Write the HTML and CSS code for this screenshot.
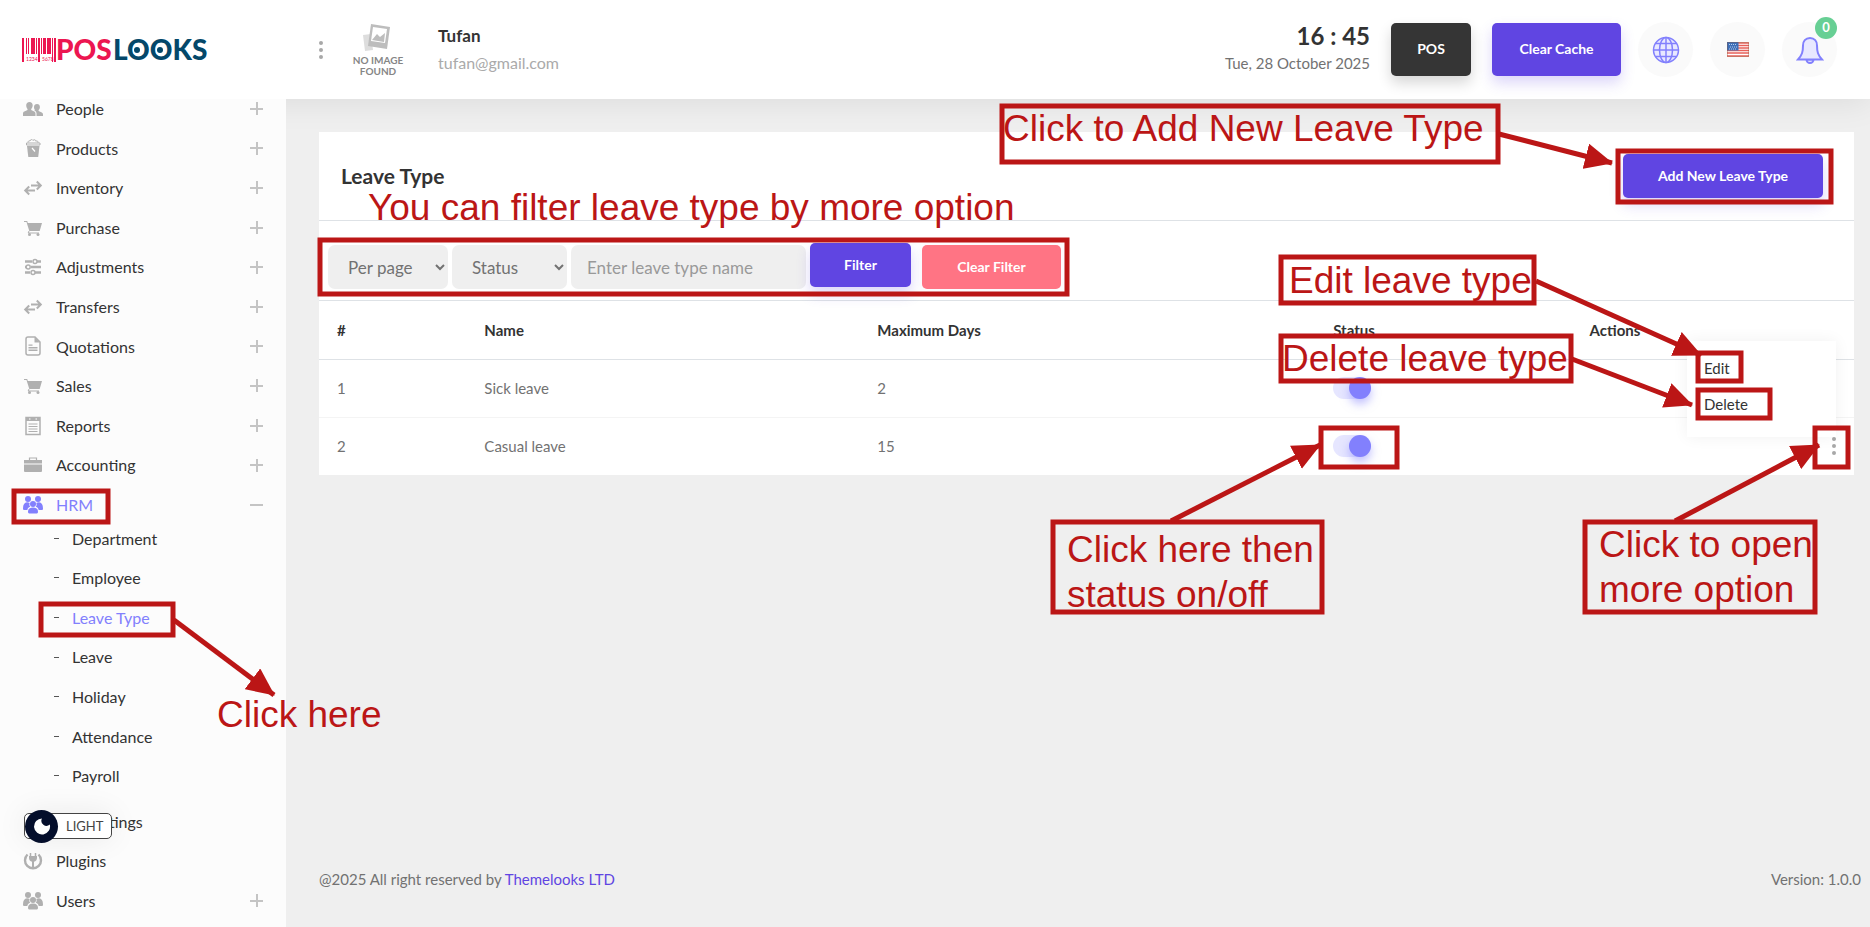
FILE: index.html
```html
<!DOCTYPE html>
<html lang="en">
<head>
<meta charset="utf-8">
<title>Leave Type</title>
<link rel="stylesheet" href="styles.css">
</head>
<body>
<svg class="sprite" aria-hidden="true">
  <symbol id="i-people" viewBox="0 0 20 20"><path d="M6.500 3c2 0 3.200 1.300 3.200 3.300 0 1.500-.6 2.800-1.500 3.600v1.200l3 1.500c.8.400 1.300 1.200 1.300 2.100V17H0v-2.300c0-.9.500-1.700 1.300-2.100l3.200-1.500V9.900C3.700 9.100 3.200 7.800 3.200 6.300 3.200 4.300 4.500 3 6.500 3z"/><path d="M14 5c1.800 0 2.900 1.200 2.900 2.900 0 1.300-.5 2.400-1.300 3.100v1l3.200 1.500c.8.400 1.200 1 1.200 1.900V17h-6.500v-2.500c0-1.200-.6-2.200-1.600-2.800l-.7-.4.800-.4V11c-.6-.7-1-1.800-1-3.100C11 6.200 12.200 5 14 5z"/></symbol>
  <symbol id="i-products" viewBox="0 0 20 20"><path d="M4 8h12.500l-1.300 11H5.300z"/><path d="M3.500 5h13.500v2H3.500zM5 4.500c0-1.500 1-2 2-1.500 0-1.500 2.500-2 3-.5 1-1.500 3-.5 2.800.7 1.500-.8 2.700.3 2.200 1.700" fill="none" stroke="currentColor"/><path d="M9 10l3 3.500" stroke="#fff" fill="none" stroke-width="1.200"/></symbol>
  <symbol id="i-swap" viewBox="0 0 20 20"><path d="M8 7.500h9.500M13.800 3.500l4 4-4 4M12 12.500H2.500M6.200 8.500l-4 4 4 4" fill="none" stroke="currentColor" stroke-width="2"/></symbol>
  <symbol id="i-cart" viewBox="0 0 20 20"><path d="M1 3h3.200l.6 2H19l-2.300 8H6.300L3.500 4H1z"/><path d="M6 13l-.8 2H16" fill="none" stroke="currentColor"/><circle cx="6.500" cy="16.500" r="1.500"/><circle cx="15" cy="16.500" r="1.500"/></symbol>
  <symbol id="i-sliders" viewBox="0 0 20 20"><path d="M2 4.500h7M14 4.500h4M2 10h1.500M8 10h10M2 15.500h5M12 15.500h6" fill="none" stroke="currentColor" stroke-width="2.400"/><g fill="none" stroke="currentColor" stroke-width="1.500"><circle cx="12" cy="4.500" r="2"/><circle cx="5.200" cy="10" r="2"/><circle cx="10" cy="15.500" r="2"/></g></symbol>
  <symbol id="i-file" viewBox="0 0 20 20"><path d="M5 1h7l5 5v11a2 2 0 0 1-2 2H5a2 2 0 0 1-2-2V3a2 2 0 0 1 2-2z" fill="none" stroke="currentColor" stroke-width="1.500"/><path d="M11.500 1L17 6.500h-5.500zM5.500 8.500h4v1.300h-4zM5.500 11h9v1.500h-9zM5.500 13.500h9V15h-9z"/></symbol>
  <symbol id="i-report" viewBox="0 0 20 20"><path d="M3 1.500h14v17H3z" fill="none" stroke="currentColor" stroke-width="1.500"/><path d="M3 1.500h14V5H3z"/><path d="M5.500 8h9M5.500 10.500h9M5.500 13h9M5.500 15.500h9" fill="none" stroke="currentColor" stroke-width="1.200"/><path d="M6 3h1.500M12.500 3H14" stroke="#fff"/></symbol>
  <symbol id="i-case" viewBox="0 0 20 20"><path d="M1 5h18v3.500H1zM1 9.500h18V16a1 1 0 0 1-1 1H2a1 1 0 0 1-1-1z"/><path d="M6.500 5V3h7v2" fill="none" stroke="currentColor" stroke-width="1.200"/></symbol>
  <symbol id="i-group" viewBox="0 0 20 20"><circle cx="5" cy="4" r="3"/><circle cx="15" cy="4" r="3"/><path d="M0 13.500C0 9.500 1.500 7.500 4 7.300c1 0 2 .2 2.700.8C6 10 6.500 11 7.200 11.800 5.500 12.500 4.500 13.500 4.300 15H1.500C.5 15 0 14.500 0 13.500zM20 13.500c0-4-1.500-6-4-6.200-1 0-2 .2-2.700.8.700 1.900.2 2.900-.5 3.700 1.700.7 2.700 1.700 2.900 3.200h2.800c1 0 1.500-.5 1.500-1.500z"/><circle cx="10" cy="9" r="3"/><path d="M5 17c0-3 1.500-4.600 5-4.600s5 1.600 5 4.600c0 1-1 1.500-2 1.500H7c-1 0-2-.5-2-1.500z"/></symbol>
  <symbol id="i-gear" viewBox="0 0 20 20"><circle cx="10" cy="10" r="6" fill="none" stroke="currentColor" stroke-width="4"/></symbol>
  <symbol id="i-plug" viewBox="0 0 20 20"><path d="M4.500 3.500a8 8 0 1 0 11 0" fill="none" stroke="currentColor" stroke-width="2.400"/><path d="M7.500 2v3M12.500 2v3" stroke="currentColor" stroke-width="1.500"/><path d="M6 5h8v2c0 2-1.200 3.300-3 3.700V16H9v-5.300C7.200 10.300 6 9 6 7z"/></symbol>
</svg>

<header class="topbar">
  <a class="brand" href="#" aria-label="PosLooks">
    <svg class="logo" width="190" height="34" viewBox="0 0 190 34">
      <g fill="#ec1651"><path d="M0 5h2v24H0zM4 5h1v16H4zM6 5h1v16H6zM9 5h4v16H9zM14 5h1v16h-1zM16 5h2v24h-2zM19 5h1v16h-1zM21 5h3v16h-3zM25 5h4v16h-4zM30 5h1v24h-1zM32 5h2v24h-2z"/>
      <text class="logo-small" x="4" y="28">1234</text><text class="logo-small" x="20" y="28">5678</text>
      <text class="logo-text" x="34" y="27">POS</text></g>
      <text class="logo-text" x="91" y="27" fill="#04486a">LOOKS</text>
      <g fill="#04486a"><circle cx="115" cy="17" r="3"/><circle cx="138" cy="17" r="3"/></g>
    </svg>
  </a>
  <button class="dots" aria-label="Menu"><i></i><i></i><i></i></button>
  <div class="avatar">
    <svg width="32" height="30" viewBox="0 0 32 30"><path d="M1 12l8-1 2 16-8 1z" fill="#ddd"/><path d="M9 1l19 3-3 22L6 23z" fill="#bdbdbd"/><path d="M11 4l14 2-2 14-14-2z" fill="#fff"/><path d="M10 17l5-6 3 3 5-4-1 9z" fill="#bdbdbd"/></svg>
    <span>NO IMAGE<br>FOUND</span>
  </div>
  <div class="user"><strong>Tufan</strong><span>tufan@gmail.com</span></div>
  <div class="clock"><strong>16 : 45</strong><span>Tue, 28 October 2025</span></div>
  <button class="btn btn-tall btn-dark">POS</button>
  <button class="btn btn-tall btn-wide">Clear Cache</button>
  <div class="rounds">
    <button class="round" aria-label="Website"><svg width="28" height="28" viewBox="0 0 28 28" fill="#e8e8ff" stroke="#8280fd" stroke-width="1.500"><circle cx="14" cy="14" r="12.500"/><ellipse cx="14" cy="14" rx="6.500" ry="12.500"/><path d="M14 1.500v25M1.500 14h25M3.500 7.500h21M3.500 20.500h21" fill="none"/></svg></button>
    <button class="round" aria-label="Language"><svg width="22" height="15" viewBox="0 0 22 15"><path fill="#fff" d="M0 0h22v15H0z"/><path d="M0 1h22M0 3.500h22M0 6h22M0 8.500h22M0 11h22M0 14h22" stroke="#e8605a" stroke-width="1.400"/><path fill="#3d6fb8" d="M0 0h11.500v8.500H0z"/><path d="M2 2.500h8M3 5h7M2 7h8" stroke="#b9cdea" stroke-dasharray="1 1"/><path d="M.5.500h21v14H.5z" fill="none" stroke="#8a5030" stroke-opacity=".35"/></svg></button>
    <button class="round" aria-label="Notifications"><svg width="28" height="28" viewBox="0 0 28 28" fill="#e8e8ff" stroke="#8280fd" stroke-width="2"><path d="M10.500 23.500a3.500 3.500 0 0 0 7 0z"/><path d="M14 2c-4.500 0-7 3.300-7 7.500 0 6.500-1 9.500-5 14h24c-4-4.500-5-7.500-5-14C21 5.300 18.500 2 14 2z"/></svg><b class="badge">0</b></button>
  </div>
</header>

<div class="shell">
  <nav class="sidebar">
    <ul class="menu">
      <li><a href="#"><svg><use href="#i-people"/></svg>People<em class="plus"></em></a></li>
      <li><a href="#"><svg><use href="#i-products"/></svg>Products<em class="plus"></em></a></li>
      <li><a href="#"><svg><use href="#i-swap"/></svg>Inventory<em class="plus"></em></a></li>
      <li><a href="#"><svg><use href="#i-cart"/></svg>Purchase<em class="plus"></em></a></li>
      <li><a href="#"><svg><use href="#i-sliders"/></svg>Adjustments<em class="plus"></em></a></li>
      <li><a href="#"><svg><use href="#i-swap"/></svg>Transfers<em class="plus"></em></a></li>
      <li><a href="#"><svg><use href="#i-file"/></svg>Quotations<em class="plus"></em></a></li>
      <li><a href="#"><svg><use href="#i-cart"/></svg>Sales<em class="plus"></em></a></li>
      <li><a href="#"><svg><use href="#i-report"/></svg>Reports<em class="plus"></em></a></li>
      <li><a href="#"><svg><use href="#i-case"/></svg>Accounting<em class="plus"></em></a></li>
      <li><a class="active" href="#"><svg><use href="#i-group"/></svg>HRM<em class="plus minus"></em></a>
        <ul class="submenu">
          <li><a href="#">Department</a></li>
          <li><a href="#">Employee</a></li>
          <li><a class="active" href="#">Leave Type</a></li>
          <li><a href="#">Leave</a></li>
          <li><a href="#">Holiday</a></li>
          <li><a href="#">Attendance</a></li>
          <li><a href="#">Payroll</a></li>
        </ul>
      </li>
      <li><a href="#"><svg><use href="#i-gear"/></svg>Site Settings</a></li>
      <li><a href="#"><svg><use href="#i-plug"/></svg>Plugins</a></li>
      <li><a href="#"><svg><use href="#i-group"/></svg>Users<em class="plus"></em></a></li>
    </ul>
  </nav>

  <main class="main">
    <section class="card">
      <div class="card-head">
        <h1>Leave Type</h1>
        <button class="btn btn-add">Add New Leave Type</button>
      </div>
      <form class="filters">
        <select class="field per-page" aria-label="Per page"><option>Per page</option></select>
        <select class="field status" aria-label="Status"><option>Status</option></select>
        <input class="field name" type="text" aria-label="Leave type name" placeholder="Enter leave type name">
        <button class="btn btn-filter" type="button">Filter</button>
        <button class="btn btn-clear" type="button">Clear Filter</button>
      </form>
      <table class="table">
        <colgroup><col class="c-num"><col class="c-name"><col class="c-days"><col class="c-status"><col></colgroup>
        <thead><tr><th>#</th><th>Name</th><th>Maximum Days</th><th>Status</th><th>Actions</th></tr></thead>
        <tbody>
          <tr><td>1</td><td>Sick leave</td><td>2</td>
            <td><input class="switch" type="checkbox" checked aria-label="Sick leave status"></td>
            <td><div class="actions"><button class="dots" aria-label="More"><i></i><i></i><i></i></button></div></td></tr>
          <tr><td>2</td><td>Casual leave</td><td>15</td>
            <td><input class="switch" type="checkbox" checked aria-label="Casual leave status"></td>
            <td><div class="actions"><button class="dots" aria-label="More"><i></i><i></i><i></i></button>
              <div class="dropdown"><a href="#">Edit</a><a href="#">Delete</a></div></div></td></tr>
        </tbody>
      </table>
    </section>
    <footer class="footer"><span>@2025 All right reserved by <a href="#">Themelooks LTD</a></span><span>Version: 1.0.0</span></footer>
  </main>
</div>

<button class="theme"><span class="moon"><svg width="18" height="18" viewBox="0 0 18 18"><path d="M9 1.500a5 5 0 0 0 7.800 6A8 8 0 1 1 9 1.500z" fill="#fff"/></svg></span>LIGHT</button>

<svg class="notes">
  <defs><marker id="head" viewBox="0 0 28 26" refX="27" refY="13" markerWidth="28" markerHeight="26" markerUnits="userSpaceOnUse" orient="auto"><path d="M0 0l28 13L0 26z"/></marker></defs>
  <g class="boxes">
    <rect x="1002" y="106" width="496" height="56"/>
    <rect x="1618" y="151" width="213" height="51"/>
    <rect x="320" y="240" width="747" height="54"/>
    <rect x="1281" y="257" width="253" height="46"/>
    <rect x="1281" y="336" width="290" height="45"/>
    <rect x="1698" y="353" width="43" height="28"/>
    <rect x="1698" y="390" width="72" height="28"/>
    <rect x="1321" y="428" width="76" height="39"/>
    <rect x="1815" y="428" width="33" height="39"/>
    <rect x="1053" y="522" width="269" height="90"/>
    <rect x="1585" y="522" width="230" height="90"/>
    <rect x="14" y="491" width="94" height="31"/>
    <rect x="41" y="604" width="132" height="31"/>
  </g>
  <g class="arrows">
    <path d="M174 620L274 695"/><path d="M1499 134L1612 163"/><path d="M1536 281L1701 355"/><path d="M1572 359L1692 405"/><path d="M1171 521L1320 445"/><path d="M1675 521L1819 445"/>
  </g>
  <g class="labels">
    <text x="1003" y="141">Click to Add New Leave Type</text>
    <text x="368" y="220">You can filter leave type by more option</text>
    <text x="1289" y="293">Edit leave type</text>
    <text x="1282" y="371">Delete leave type</text>
    <text x="1067" y="562">Click here then</text>
    <text x="1067" y="607">status on/off</text>
    <text x="1599" y="557">Click to open</text>
    <text x="1599" y="602">more option</text>
    <text x="217" y="727">Click here</text>
  </g>
</svg>
</body>
</html>
```
FILE: styles.css
```css
* { box-sizing: border-box; }
body {
  margin: 0;
  height: 100vh;
  display: flex;
  flex-direction: column;
  overflow: hidden;
  background: #efefef;
  color: #727272;
  font: 15px/1.6 Lato, sans-serif;
}
a { color: inherit; text-decoration: none; }
ul { margin: 0; padding: 0; list-style: none; }
button { border: 0; padding: 0; background: none; font: inherit; color: inherit; }
.sprite { position: absolute; width: 0; height: 0; }

.topbar {
  display: flex;
  align-items: center;
  height: 99px;
  flex: none;
  padding: 0 33px 0 22px;
  background: #fff;
  box-shadow: 0 4px 30px rgba(0, 0, 0, .08);
  z-index: 2;
}
.brand { width: 297px; flex: none; display: flex; }
.logo-text { font: 900 28px Lato, sans-serif; }
.logo-small { font: 5px Lato, sans-serif; }
.dots { display: flex; flex-direction: column; gap: 3px; width: 4px; }
.dots i { width: 4px; height: 4px; border-radius: 50%; background: #a8a8a8; }
.avatar {
  display: flex;
  flex-direction: column;
  align-items: center;
  width: 60px;
  margin-left: 25px;
  text-align: center;
  white-space: nowrap;
  font: bold 10px/11px Lato, sans-serif;
  color: #868686;
}
.avatar svg { margin-bottom: 2px; }
.user { margin-left: 30px; display: flex; flex-direction: column; gap: 3px; }
.user strong { color: #333; font-size: 17px; line-height: 24px; }
.user span { color: #aaa; font-size: 16px; line-height: 24px; }
.clock { margin-left: auto; margin-right: 21px; padding-bottom: 4px; text-align: right; display: flex; flex-direction: column; }
.clock strong { color: #333; font-size: 24px; line-height: 30px; }
.btn {
  height: 44px;
  padding: 0 33px;
  border-radius: 5px;
  background: #6045e2;
  box-shadow: 0 7px 14px rgba(96, 69, 226, .22);
  color: #fff;
  font-size: 14px;
  font-weight: bold;
  white-space: nowrap;
}
.btn-tall { height: 53px; padding: 0; width: 80px; margin-right: 21px; }
.btn-wide { width: 129px; margin-right: 17px; }
.btn-dark { background: #353535; box-shadow: 0 7px 14px rgba(0, 0, 0, .16); }
.rounds { display: flex; gap: 17px; }
.round {
  position: relative;
  width: 55px;
  height: 55px;
  border-radius: 50%;
  background: #fafafa;
  display: flex;
  align-items: center;
  justify-content: center;
}
.badge {
  position: absolute;
  top: -5px;
  right: 0;
  width: 22px;
  height: 22px;
  border-radius: 50%;
  background: #67cf94;
  color: #fff;
  font-size: 13px;
  line-height: 21px;
}

.shell { flex: 1; display: flex; min-height: 0; }
.sidebar { width: 286px; flex: none; background: #fcfcfc; overflow: hidden; font-size: 16px; color: #333; z-index: 3; }
.menu { margin-top: -10px; padding: 0 23px; }
.menu a { display: flex; align-items: center; padding: 7px 0; }
.menu svg { width: 20px; height: 20px; margin-right: 13px; color: #b0b0b0; fill: currentColor; }
.menu .active, .menu .active svg { color: #8280fd; }
.plus {
  margin-left: auto;
  width: 13px;
  height: 13px;
  background: linear-gradient(#c4c4c4, #c4c4c4) center / 13px 2px no-repeat, linear-gradient(#c4c4c4, #c4c4c4) center / 2px 13px no-repeat;
}
.minus { background: linear-gradient(#c4c4c4, #c4c4c4) center / 13px 2px no-repeat; }
.submenu { margin-top: -6px; padding: 0 0 6px 31px; }
.submenu a::before { content: ""; width: 5px; height: 1px; margin-right: 13px; background: #555; }

.main { flex: 1; display: flex; flex-direction: column; padding: 33px 16px 34px 33px; }
.card { background: #fff; }
.card-head {
  display: flex;
  justify-content: space-between;
  align-items: center;
  height: 89px;
  padding: 0 31px 0 22px;
  border-bottom: 1px solid #dee2e6;
}
h1 { margin: 0; font-size: 21px; color: #333; }
.filters { display: flex; align-items: center; height: 80px; padding: 13px 10px 0 9px; border-bottom: 1px solid #dee2e6; }
.field {
  height: 44px;
  margin-right: 4px;
  padding: 0 16px;
  border: 0;
  border-radius: 7px;
  background: #efefef;
  color: #727272;
  font: 17px Lato, sans-serif;
}
.per-page { width: 120px; padding-right: 0; }
.status { width: 115px; padding-right: 0; }
.name { width: 235px; }
.name::placeholder { color: #999; }
.btn-filter { margin: -4px 11px 0 0; width: 101px; }
.btn-clear { width: 139px; background: #ff7484; box-shadow: 0 0 8px rgba(96, 69, 226, .04); }
.btn-add { width: 200px; }
.table { width: 100%; border-collapse: collapse; table-layout: fixed; }
.table th, .table td { height: 58px; padding: 0 18px; text-align: left; }
.table th { color: #333; border-bottom: 1px solid #dee2e6; }
.table td { border-bottom: 1px solid #f4f4f4; }
.table tr:last-child td { border-bottom: 0; }
.table thead tr:last-child th { border-bottom: 1px solid #dee2e6; }
.c-num { width: 9.6%; }
.c-name { width: 25.6%; }
.c-days { width: 29.7%; }
.c-status { width: 16.7%; }
.switch {
  appearance: none;
  display: block;
  width: 38px;
  height: 22px;
  margin: 0;
  border-radius: 11px;
  background: #e6e6ff;
}
.switch::before {
  content: "";
  display: block;
  width: 22px;
  height: 22px;
  margin-left: auto;
  border-radius: 50%;
  background: #8280fd;
  box-shadow: 0 5px 10px rgba(130, 128, 253, .5);
}
.actions { position: relative; display: flex; justify-content: flex-end; }
.dropdown {
  position: absolute;
  right: 0;
  bottom: 100%;
  width: 149px;
  padding: 9px 17px 15px;
  background: #fff;
  box-shadow: 0 0 15px rgba(0, 0, 0, .06);
  color: #333;
}
.dropdown a { display: block; line-height: 36px; }
.footer { margin-top: auto; margin-right: -7px; display: flex; justify-content: space-between; line-height: 28px; }
.footer a { color: #6045e2; }

.theme {
  position: absolute;
  left: 24px;
  bottom: 88px;
  width: 88px;
  height: 26px;
  display: flex;
  align-items: center;
  border: 1px solid #444;
  border-radius: 5px;
  background: #fff;
  box-shadow: 0 0 30px rgba(0, 0, 0, .08);
  color: #444;
  font-size: 13px;
  z-index: 3;
}
.moon {
  display: flex;
  align-items: center;
  justify-content: center;
  flex: none;
  width: 33px;
  height: 33px;
  margin-right: 8px;
  border-radius: 50%;
  background: #040e2b;
}

.notes { position: absolute; left: 0; top: 0; width: 100%; height: 100%; pointer-events: none; z-index: 4; fill: #bb1616; }
.boxes { fill: none; stroke: #bb1616; stroke-width: 5px; }
.arrows { stroke: #bb1616; stroke-width: 5px; }
.arrows path { marker-end: url(#head); }
#head path { stroke: none; }
.labels { font: 37px "Liberation Sans", Arial, sans-serif; }
```
